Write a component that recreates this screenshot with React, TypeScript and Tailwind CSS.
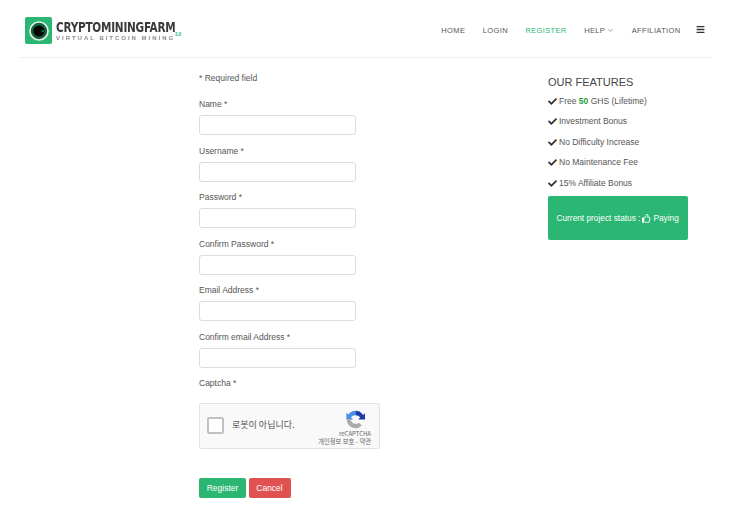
import { ChevronDown } from 'lucide-react'
import { FaBars, FaCheck, FaRegThumbsUp } from 'react-icons/fa'

const fields = ['Name *', 'Username *', 'Password *', 'Confirm Password *', 'Email Address *', 'Confirm email Address *']
const features = ['Investment Bonus', 'No Difficulty Increase', 'No Maintenance Fee', '15% Affiliate Bonus']

function Logo() {
  return (
    <div className="flex items-start">
      <div className="w-[27px] h-[27px] rounded-[2px] bg-[#2bb673] flex items-center justify-center">
        <svg viewBox="0 0 20 20" className="w-[20px] h-[20px] blur-[0.3px]">
          <circle cx="10" cy="10" r="9" fill="#17633f" stroke="#e3f4ea" strokeWidth="1.6" />
          <circle cx="10" cy="10" r="5.6" fill="#000" />
          <path d="M15 8.5L11 10L15 11.5z" fill="#17633f" />
        </svg>
      </div>
      <div className="ml-[4px] mt-[4px] relative">
        <div className="text-[14px] leading-[13px] font-bold text-[#3a3a3a] font-['DejaVu_Sans',sans-serif] tracking-[-0.35px] scale-x-[0.75] origin-left blur-[0.3px] whitespace-nowrap">
          CRYPTOMININGFARM
        </div>
        <div className="text-[6px] leading-[8px] font-bold text-[#8a8a8a] tracking-[1.98px] blur-[0.2px] whitespace-nowrap">
          VIRTUAL BITCOIN MINING
        </div>
        <span className="absolute left-[119px] top-[11px] text-[4.5px] leading-[5px] font-bold text-[#2bb673]">3.0</span>
      </div>
    </div>
  )
}

function Header() {
  return (
    <header className="h-[58px] mx-[19px] pl-[6px] pr-[7px] pt-[17px] border-b border-[#f0f0f0] flex justify-between items-start">
      <Logo />
      <nav className="flex items-center gap-[17.5px] pt-[7px] text-[7.5px] leading-[13px] tracking-[0.36px] text-[#555]">
        <a>HOME</a>
        <a>LOGIN</a>
        <a className="text-[#2bb673]">REGISTER</a>
        <a className="flex items-center gap-[2px]">HELP <ChevronDown size={7} /></a>
        <a>AFFILIATION</a>
        <FaBars size={9} className="-ml-[2px] -mt-[2px] text-[#333]" />
      </nav>
    </header>
  )
}

function Recaptcha() {
  return (
    <div className="w-[181px] h-[46px] mt-[13px] bg-[#f9f9f9] border border-[#e3e3e3] rounded-[2px] flex relative">
      <div className="w-[17px] h-[17px] mt-[13px] ml-[7px] bg-white border-2 border-[#c1c1c1] rounded-[2px]" />
      <span className="ml-[8px] mt-[13px] text-[9px] leading-[16px] text-[#555] font-['Noto_Sans_CJK_KR',sans-serif]">로봇이 아닙니다.</span>
      <svg viewBox="0 0 24 24" className="absolute left-[146px] top-[6px] w-[19px] h-[19px] blur-[0.2px]">
        <path d="M12 1a11 11 0 0 0-9 4.7L0.5 3v9H9L6.2 9A7 7 0 0 1 12 6.5z" fill="#4a90e2" />
        <path d="M12 1a11 11 0 0 1 9.5 5.4L24 4v8h-8.5l2.5-2.5A7 7 0 0 0 12 6.5z" fill="#1c3aa9" />
        <path d="M1 12a11 11 0 0 0 19 7.5L16.5 16A6.5 6.5 0 0 1 6 12z" fill="#ababab" />
      </svg>
      <div className="absolute right-[8px] top-[26px] text-right text-[#666] font-['Noto_Sans_CJK_KR',sans-serif]">
        <div className="text-[6px] leading-[8px]">reCAPTCHA</div>
        <div className="text-[6.3px] leading-[8px] whitespace-nowrap">개인정보 보호 - 약관</div>
      </div>
    </div>
  )
}

function Form() {
  return (
    <div className="ml-[199px] w-[181px] pt-[14px] text-[8.5px] leading-[13px] text-[#555]">
      <p>* Required field</p>
      <div className="mt-[6.5px]">
        {fields.map(f => (
          <div key={f} className="h-[46.5px] pt-[6.5px]">
            <label className="block">{f}</label>
            <input type="text" className="block mt-[4px] w-[157px] h-[20px] bg-white border border-[#ddd] rounded-[3px]" />
          </div>
        ))}
      </div>
      <p className="mt-[6.5px]">Captcha *</p>
      <Recaptcha />
      <div className="flex gap-[2.5px] mt-[29px]">
        <button className="w-[47px] h-[20px] rounded-[2px] bg-[#2bb673] text-white text-[8.5px]">Register</button>
        <button className="w-[42px] h-[20px] rounded-[2px] bg-[#e05252] text-white text-[8.5px]">Cancel</button>
      </div>
    </div>
  )
}

function Sidebar() {
  return (
    <aside className="ml-[168px] w-[140px] pt-[17px] text-[8.5px] leading-[13px] text-[#555]">
      <h3 className="text-[11px] leading-[14px] text-[#444]">OUR FEATURES</h3>
      <div className="mt-[6px] flex items-center gap-[2px]">
        <FaCheck size={9} className="text-[#333]" />
        <span>Free <b className="text-[#1f9d3a]">50</b> GHS (Lifetime)</span>
      </div>
      {features.map(f => (
        <div key={f} className="mt-[7.4px] flex items-center gap-[2px]">
          <FaCheck size={9} className="text-[#333]" />
          <span>{f}</span>
        </div>
      ))}
      <div className="mt-[6px] h-[44px] pt-[1px] rounded-[2px] bg-[#2bb673] text-white text-[8.3px] flex items-center pl-[8.5px] gap-[2px] whitespace-nowrap">
        Current project status : <FaRegThumbsUp size={9} /> Paying
      </div>
    </aside>
  )
}

export default function App() {
  return (
    <div className="w-[731px] h-[510px] overflow-hidden bg-white font-['Liberation_Sans',Arial,sans-serif]">
      <Header />
      <main className="flex">
        <Form />
        <Sidebar />
      </main>
    </div>
  )
}
